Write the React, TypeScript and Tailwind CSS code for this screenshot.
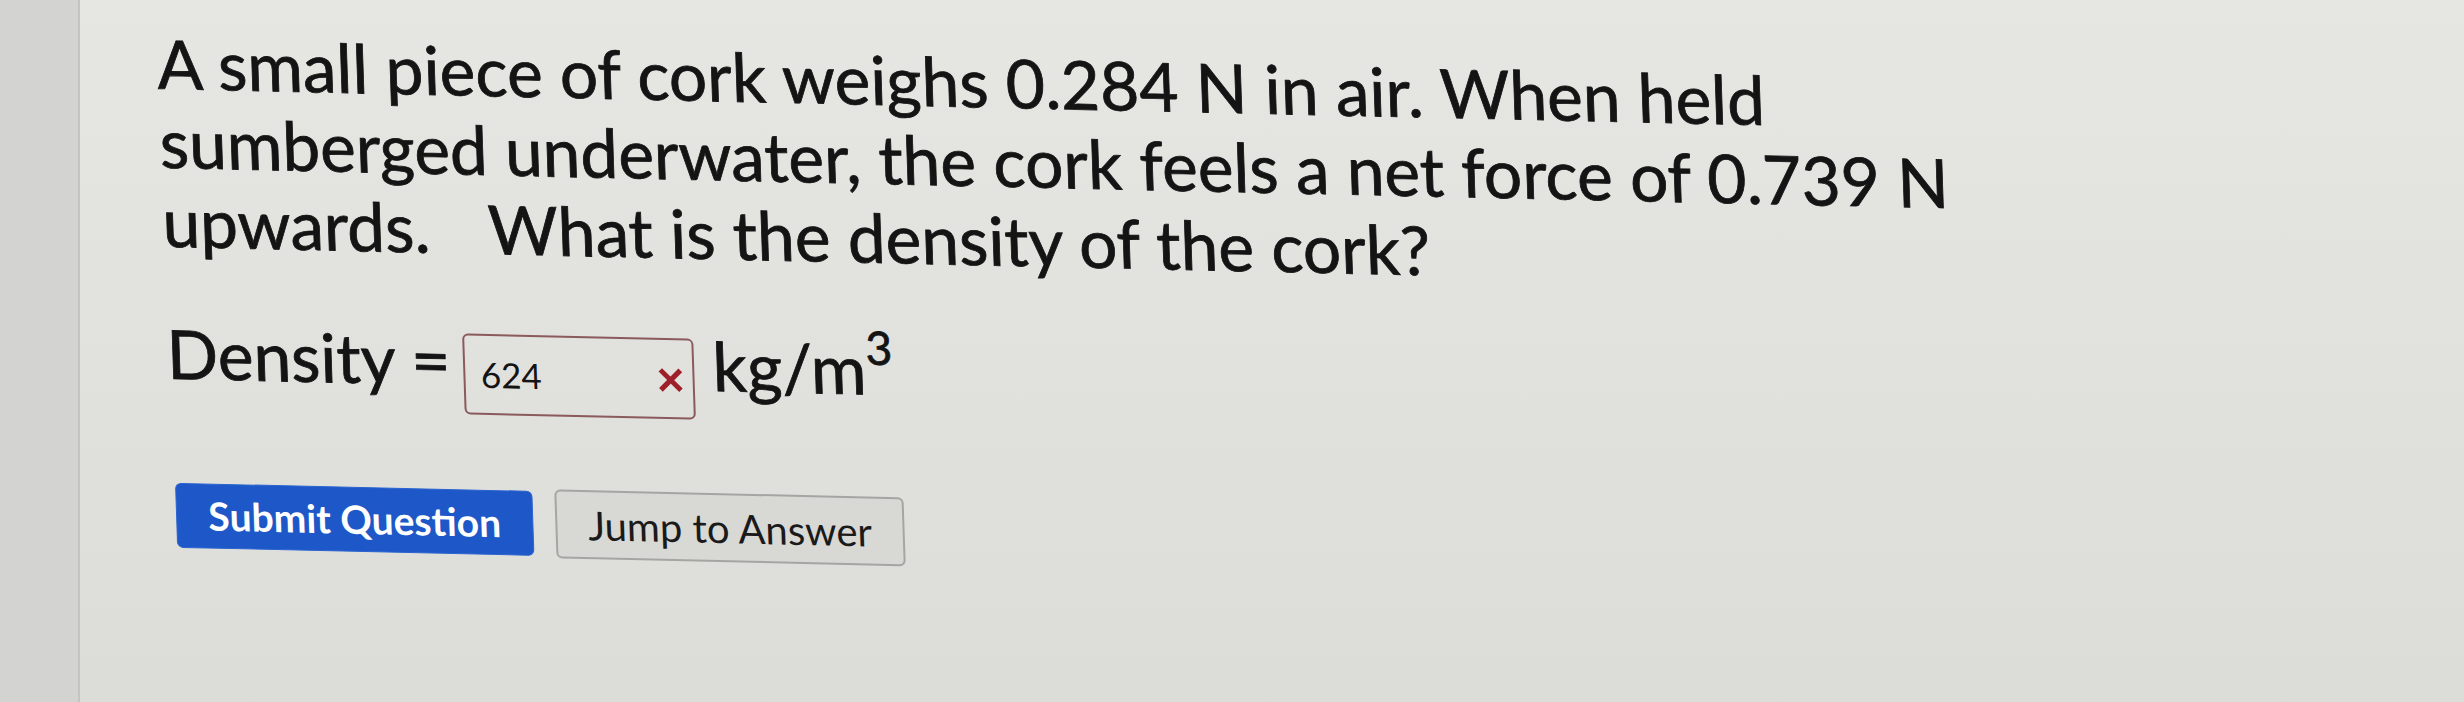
const WrongMark = () => (
  <svg width="26" height="26" viewBox="0 0 26 26" className="mt-[2px] shrink-0">
    <path d="M3 3 L23 23 M23 3 L3 23" stroke="#9e1f2a" strokeWidth="5" strokeLinecap="butt" />
  </svg>
);

const App = () => {
  return (
    <div className="flex h-[702px] w-[2464px] overflow-hidden bg-linear-to-b from-[#e6e6e3] to-[#dcdcd8] font-[Lato,sans-serif] text-[#141414]">
      <div className="h-full w-[80px] shrink-0 border-r-2 border-[#c4c4c2] bg-[#d3d3d2]" />
      <div className="flex-1">
        <div className="origin-top-left skew-x-[1.9deg] skew-y-[1.3deg] pl-[75px] pt-[21px]">
          <div className="text-[67.5px] leading-[79px] [-webkit-text-stroke:0.8px_#141414]">
            <div>A small piece of cork weighs 0.284 N in air. When held</div>
            <div>sumberged underwater, the cork feels a net force of 0.739 N</div>
            <div>
              upwards.<span className="ml-[58px]">What is the density of the cork?</span>
            </div>
          </div>

          <div className="mt-[53px] flex items-start text-[67.5px] leading-[79px]">
            <span className="whitespace-pre [-webkit-text-stroke:0.8px_#141414]">Density =</span>
            <div className="ml-[13px] mt-[14px] flex h-[81px] w-[231px] items-center justify-between rounded-[6px] border-2 border-[#8a5a5c] pl-[15px] pr-[9px] text-[35px] leading-none">
              <span>624</span>
              <WrongMark />
            </div>
            <span className="ml-[18px] [-webkit-text-stroke:0.8px_#141414]">
              kg/m<sup className="top-[-30px] text-[46px]">3</sup>
            </span>
          </div>

          <div className="mt-[73px] flex items-center gap-[22px] pl-[4px]">
            <button className="h-[65px] w-[357px] rounded-[6px] border border-[#2a64d0] bg-[#1e58c8] text-[39px] font-bold text-white">
              Submit Question
            </button>
            <button className="h-[69px] w-[349px] rounded-[6px] border-2 border-[#a5a5a3] bg-[#d8d8d5] text-[40px] text-[#1a1a1a]">
              Jump to Answer
            </button>
          </div>
        </div>
      </div>
    </div>
  );
};

export default App;
